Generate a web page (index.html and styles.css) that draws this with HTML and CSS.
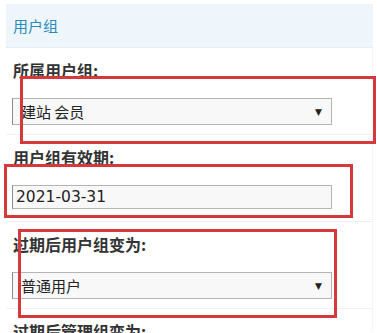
FILE: index.html
```html
<!DOCTYPE html>
<html lang="zh-CN">
<head>
  <meta charset="UTF-8" />
  <meta name="viewport" content="width=device-width, initial-scale=1.0" />
  <title>用户组</title>
  <link rel="stylesheet" href="styles.css">
</head>
<body>
  <div class="panel">
    <div class="panel-head">用户组</div>
    <div class="form-row">
      <div class="label">所属用户组:</div>
      <div class="select-box">
        <span class="select-text">建站 会员</span>
        <span class="select-arrow">▼</span>
      </div>
    </div>
    <div class="form-row form-row-input">
      <div class="label">用户组有效期:</div>
      <input class="text-input" type="text" value="2021-03-31" />
    </div>
    <div class="form-row">
      <div class="label">过期后用户组变为:</div>
      <div class="select-box">
        <span class="select-text">普通用户</span>
        <span class="select-arrow">▼</span>
      </div>
    </div>
    <div class="form-row">
      <div class="label">过期后管理组变为:</div>
    </div>
  </div>

  <!-- 标注框 -->
  <div class="mark mark-1"></div>
  <div class="mark mark-2"></div>
  <div class="mark mark-3"></div>
</body>
</html>
```

FILE: styles.css
```css
:root {
  --head-bg: #eef6fb;
  --head-color: #2a8cb8;
  --line: #edf1f4;
  --mark: #d6393b;
}
body {
  margin: 0;
  background: #fff;
  font-family: "Noto Sans CJK SC", "Microsoft YaHei", sans-serif;
  color: #333;
  font-size: 14px;
  position: relative;
  height: 333px;
  overflow: hidden;
}
.panel {
  margin: 4px 4px 0 6px;
  border-right: 1px dotted #e6edf2;
}
.panel-head {
  height: 43px;
  line-height: 43px;
  padding-left: 7px;
  background: var(--head-bg);
  color: var(--head-color);
  font-size: 15px;
  border-bottom: 1px dotted #dbe6ee;
}
.form-row {
  padding: 11px 6px 9px;
  border-bottom: 1px solid var(--line);
}
.form-row-input {
  padding-bottom: 12px;
}
.label {
  height: 22px;
  line-height: 22px;
  padding-left: 1px;
  font-weight: bold;
  color: #333;
  font-size: 16px;
}
.select-box {
  margin-top: 17px;
  height: 25px;
  border: 1px solid #b4b4b4;
  border-left-color: #8a8a8a;
  background: #f8f8f8;
  display: flex;
  align-items: center;
  justify-content: space-between;
  padding: 0 0 0 8px;
  width: 310px;
}
.select-text {
  font-size: 15px;
  color: #222;
}
.select-arrow {
  font-size: 9px;
  color: #222;
  margin-right: 9px;
  font-family: "DejaVu Sans", sans-serif;
}
.text-input {
  display: block;
  margin-top: 17px;
  width: 320px;
  height: 24px;
  box-sizing: border-box;
  border: 1px solid #b4b4b4;
  border-left-color: #8a8a8a;
  background: #f8f8f8;
  padding: 0 3px;
  font-family: "DejaVu Sans", sans-serif;
  font-size: 15.5px;
  color: #222;
  outline: none;
}
.mark {
  position: absolute;
  border: 3px solid var(--mark);
  box-sizing: border-box;
}
.mark-1 {
  left: 20px;
  top: 76px;
  width: 356px;
  height: 68px;
}
.mark-2 {
  left: 4px;
  top: 164px;
  width: 349px;
  height: 54px;
}
.mark-3 {
  left: 18px;
  top: 229px;
  width: 319px;
  height: 89px;
}
```
